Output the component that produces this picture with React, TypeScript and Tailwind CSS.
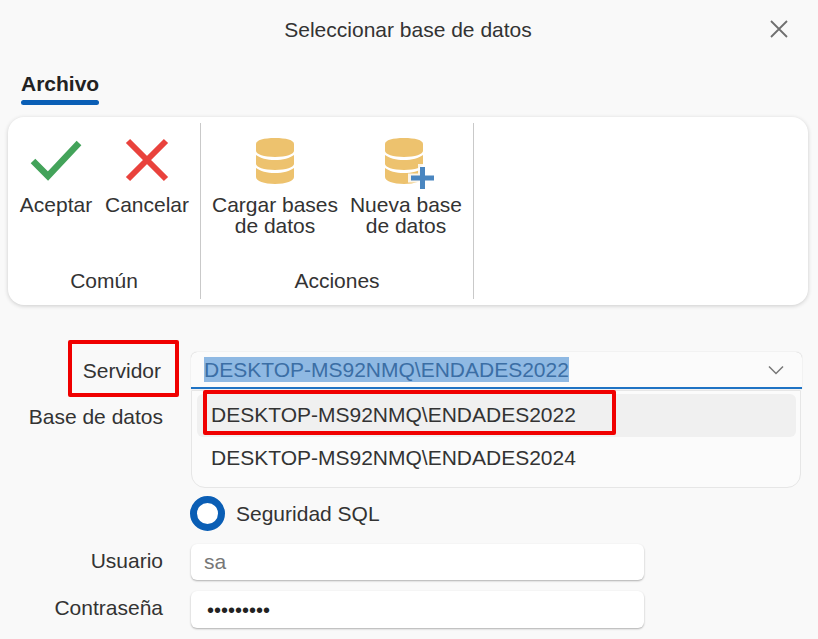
function DbIcon({ plus }: { plus?: boolean }) {
  return (
    <svg width="48" height="48" viewBox="0 0 48 48" className={plus ? 'block -ml-[4px] overflow-visible' : 'block'}>
      <path d="M5 8c0-4 8-6 19-6s19 2 19 6v7c0 3-8 6-19 6S5 18 5 15z" fill="#edc26e" />
      <path d="M5 19c4 3 11 5 19 5s15-2 19-5v9c0 3-8 6-19 6S5 31 5 28z" fill="#edc26e" />
      <path d="M5 32c4 3 11 5 19 5s15-2 19-5v9c0 4-8 7-19 7S5 45 5 41z" fill="#edc26e" />
      {plus && (
        <>
          <path d="M42.500 28v28M28 42h29" stroke="#ffffff" strokeWidth="9" opacity="0.85" />
          <path d="M42.500 31v22M31 42h23" stroke="#4a86c0" strokeWidth="5" />
        </>
      )}
    </svg>
  );
}

function RibbonButton({ icon, label, width }: { icon: React.ReactNode; label: React.ReactNode; width: string }) {
  return (
    <div className={`flex flex-col items-center ${width}`}>
      <div className="flex h-[48px] items-center justify-center">{icon}</div>
      <div className="mt-[10px] text-center text-[21px] leading-[21px] whitespace-nowrap">{label}</div>
    </div>
  );
}

export default function App() {
  return (
    <div className="relative h-[639px] w-[818px] overflow-hidden bg-[#f9f9f9] font-['Liberation_Sans',sans-serif] text-[21px] text-[#333]">
      <div className="relative flex h-[60px] items-center justify-center pr-[2px] text-[#333]">
        Seleccionar base de datos
        <svg width="20" height="20" viewBox="0 0 20 20" className="absolute top-[19px] right-[29px]">
          <path d="M2 2l16 16M18 2L2 18" stroke="#6f6f6f" strokeWidth="1.800" />
        </svg>
      </div>

      <div className="mt-[12px] ml-[21px] w-[78px]">
        <div className="text-center text-[21px] leading-[24px] font-bold text-[#222]">Archivo</div>
        <div className="mt-[4px] h-[5px] rounded-full bg-[#0a5eb5]" />
      </div>

      <div className="mt-[12px] ml-[8px] flex h-[188px] w-[800px] rounded-[16px] bg-white py-[6px] shadow-[0_1px_4px_rgba(0,0,0,0.18)]">
        <div className="flex w-[193px] flex-col border-r border-[#c9c9c9]">
          <div className="flex flex-1 pt-[13px] pl-[5px]">
            <RibbonButton
              width="w-[86px]"
              label="Aceptar"
              icon={
                <svg width="52" height="44" viewBox="0 0 52 44">
                  <path d="M3 23l15 15L49 5" fill="none" stroke="#43a35a" strokeWidth="6.500" />
                </svg>
              }
            />
            <RibbonButton
              width="w-[96px]"
              label="Cancelar"
              icon={
                <svg width="44" height="44" viewBox="0 0 44 44">
                  <path d="M3 3l38 38M41 3L3 41" fill="none" stroke="#e9423c" strokeWidth="6" />
                </svg>
              }
            />
          </div>
          <div className="pb-[6px] text-center leading-[24px]">Común</div>
        </div>
        <div className="flex w-[273px] flex-col border-r border-[#c9c9c9]">
          <div className="flex flex-1 pt-[13px] pl-[9px]">
            <RibbonButton width="w-[130px]" label={<>Cargar bases<br />de datos</>} icon={<DbIcon />} />
            <RibbonButton width="w-[132px]" label={<>Nueva base<br />de datos</>} icon={<DbIcon plus />} />
          </div>
          <div className="pb-[6px] text-center leading-[24px]">Acciones</div>
        </div>
      </div>

      <div className="mt-[47px] flex flex-col">
        <div className="flex h-[37px] items-center">
          <div className="w-[161px] text-right">Servidor</div>
          <div className="ml-[30px] flex h-[37px] w-[611px] items-center justify-between rounded-t-[6px] border-b-2 border-[#1f73c4] bg-[#fbfbfb] pr-[18px] pl-[13px] shadow-[0_0_1px_rgba(0,0,0,0.3)]">
            <span className="bg-[#8fb9e3] leading-[25px] text-[#3b6ea5]">DESKTOP-MS92NMQ\ENDADES2022</span>
            <svg width="16" height="10" viewBox="0 0 16 10">
              <path d="M1 1.500l7 7 7-7" fill="none" stroke="#777" strokeWidth="1.500" />
            </svg>
          </div>
        </div>
        <div className="mt-[9px] flex h-[37px] items-center">
          <div className="w-[163px] text-right">Base de datos</div>
        </div>
        <div className="mt-[61px] ml-[190px] flex h-[35px] items-center gap-[11px]">
          <div className="h-[35px] w-[35px] rounded-full border-[7px] border-[#0a5eb5] bg-white" />
          <span>Seguridad SQL</span>
        </div>
        <div className="mt-[13px] flex h-[36px] items-center">
          <div className="w-[163px] pb-[2px] text-right">Usuario</div>
          <div className="ml-[28px] flex h-[36px] w-[453px] items-center rounded-[6px] bg-white pl-[13px] text-[#777] shadow-[0_1px_2px_rgba(0,0,0,0.3)]">sa</div>
        </div>
        <div className="mt-[11px] flex h-[37px] items-center">
          <div className="w-[163px] pb-[3px] text-right">Contraseña</div>
          <div className="ml-[28px] flex h-[37px] w-[453px] items-center rounded-[6px] bg-white pl-[16px] text-[20px] text-[#222] shadow-[0_1px_2px_rgba(0,0,0,0.3)]">•••••••••</div>
        </div>
      </div>

      {/* desplegable abierto */}
      <div className="absolute top-[390px] left-[191px] flex h-[98px] w-[610px] flex-col rounded-b-[14px] border border-[#e6e6e6] bg-[#fbfbfb] pt-[3px] pr-[4px] pl-[5px]">
        <div className="flex h-[43px] items-center rounded-[6px] bg-[#f0f0f0] pb-[2px] pl-[14px]">DESKTOP-MS92NMQ\ENDADES2022</div>
        <div className="flex h-[43px] items-center pb-[2px] pl-[14px]">DESKTOP-MS92NMQ\ENDADES2024</div>
      </div>

      {/* recuadros rojos */}
      <div className="absolute top-[340px] left-[68px] h-[57px] w-[111px] rounded-[2px] border-[4px] border-[#f00000]" />
      <div className="absolute top-[390px] left-[203px] h-[45px] w-[413px] rounded-[2px] border-[4px] border-[#f00000]" />
    </div>
  );
}
